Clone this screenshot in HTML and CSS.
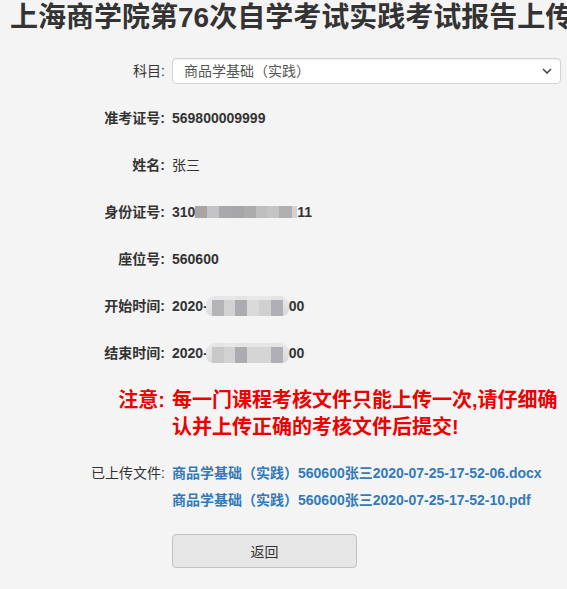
FILE: index.html
```html
<!DOCTYPE html>
<html lang="zh-CN">
<head>
<meta charset="utf-8">
<title>上海商学院第76次自学考试实践考试报告上传</title>
<link rel="stylesheet" href="styles.css">
</head>
<body>
<div class="page">
  <h2 class="title">上海商学院第76次自学考试实践考试报告上传</h2>
  <div class="form">
    <div class="row">
      <label class="lbl lbl-normal">科目:</label>
      <div class="val">
        <div class="select-wrap">
          <select class="select"><option>商品学基础（实践）</option></select>
          <svg class="chev" width="10" height="6" viewBox="0 0 10 6"><path d="M1 1l4 4 4-4" fill="none" stroke="#444" stroke-width="1.6"/></svg>
        </div>
      </div>
    </div>
    <div class="row">
      <label class="lbl">准考证号:</label>
      <div class="val"><span class="txt">569800009999</span></div>
    </div>
    <div class="row">
      <label class="lbl">姓名:</label>
      <div class="val"><span class="txt txt-normal">张三</span></div>
    </div>
    <div class="row">
      <label class="lbl">身份证号:</label>
      <div class="val">
        <span class="txt">310</span>
        <span class="mosaic mosaic-id">
          <i class="m w12 g1"></i><i class="m w12 g2"></i><i class="m w12 g3"></i><i class="m w13 g4"></i><i class="m w12 g5"></i><i class="m w11 g6"></i><i class="m w12 g7"></i><i class="m w13 g8"></i><i class="m w5 g9"></i>
        </span>
        <span class="txt">11</span>
      </div>
    </div>
    <div class="row">
      <label class="lbl">座位号:</label>
      <div class="val"><span class="txt">560600</span></div>
    </div>
    <div class="row">
      <label class="lbl">开始时间:</label>
      <div class="val">
        <span class="txt">2020-</span>
        <span class="mosaic mosaic-time">
          <i class="m w6 t1"></i><i class="m w12 t2"></i><i class="m w11 t3"></i><i class="m w12 t4"></i><i class="m w12 t5"></i><i class="m w12 t6"></i><i class="m w12 t7"></i><i class="m w6 t8"></i>
        </span>
        <span class="txt">00</span>
      </div>
    </div>
    <div class="row">
      <label class="lbl">结束时间:</label>
      <div class="val">
        <span class="txt">2020-</span>
        <span class="mosaic mosaic-time">
          <i class="m w6 t1"></i><i class="m w12 u2"></i><i class="m w11 t3"></i><i class="m w12 t4"></i><i class="m w12 u5"></i><i class="m w12 u6"></i><i class="m w12 t7"></i><i class="m w6 t8"></i>
        </span>
        <span class="txt">00</span>
      </div>
    </div>
    <div class="notice">
      <div class="notice-lbl">注意:</div>
      <div class="notice-txt">每一门课程考核文件只能上传一次,请仔细确认并上传正确的考核文件后提交!</div>
    </div>
    <div class="files">
      <div class="files-lbl">已上传文件:</div>
      <div class="files-list">
        <a class="file" href="#">商品学基础（实践）560600张三2020-07-25-17-52-06.docx</a>
        <a class="file" href="#">商品学基础（实践）560600张三2020-07-25-17-52-10.pdf</a>
      </div>
    </div>
    <div class="actions">
      <div></div>
      <div><button class="btn" type="button">返回</button></div>
    </div>
  </div>
</div>
</body>
</html>
```

FILE: styles.css
```css
html, body {
  margin: 0;
  padding: 0;
  background: #f4f4f4;
  overflow: hidden;
}
body {
  font-family: "Liberation Sans", "Noto Sans CJK SC", sans-serif;
  font-size: 14px;
  color: #333;
}
.page {
  width: 567px;
  overflow: hidden;
}
.title {
  margin: 0;
  padding-left: 10px;
  font-size: 28px;
  line-height: 36px;
  font-weight: bold;
  color: #333;
  white-space: nowrap;
}
.form {
  margin-top: 18px;
}
.row, .notice, .files, .actions {
  display: grid;
  grid-template-columns: 165px 390px;
  column-gap: 7px;
}
.row {
  min-height: 34px;
  align-items: center;
  margin-bottom: 13px;
}
.lbl {
  text-align: right;
  font-weight: bold;
  line-height: 20px;
}
.lbl-normal {
  font-weight: normal;
}
.val {
  display: flex;
  align-items: center;
  line-height: 20px;
}
.txt {
  font-weight: bold;
  white-space: pre;
}
.txt-normal {
  font-weight: normal;
}
.select-wrap {
  position: relative;
  width: 389px;
  height: 26px;
}
.select {
  appearance: none;
  -webkit-appearance: none;
  width: 100%;
  height: 26px;
  box-sizing: border-box;
  border: 1px solid #d2d2d2;
  border-radius: 4px;
  background: #fff;
  box-shadow: inset 0 1px 1px rgba(0,0,0,0.06);
  padding: 0 24px 0 11px;
  font-family: "Liberation Sans", "Noto Sans CJK SC", sans-serif;
  font-size: 14px;
  color: #555;
}
.chev {
  position: absolute;
  right: 9px;
  top: 10px;
  pointer-events: none;
}
.mosaic {
  display: inline-flex;
  overflow: hidden;
}
.mosaic-id {
  height: 12px;
}
.mosaic-time {
  height: 20px;
  margin-left: -2px;
  border-radius: 9px 9px 7px 7px;
}
.m {
  display: block;
  height: 100%;
}
.w5 { width: 5px; }
.w6 { width: 6px; }
.w11 { width: 11px; }
.w12 { width: 12px; }
.w13 { width: 13px; }
.g1 { background: #a9a5a4; }
.g2 { background: #c3c3c6; }
.g3 { background: #a9a9a9; }
.g4 { background: #a7a7a9; }
.g5 { background: #acacac; }
.g6 { background: #bfbebe; }
.g7 { background: #c4c4c6; }
.g8 { background: #b0b0b0; }
.g9 { background: #d2d2d2; }
.t1 { background: linear-gradient(#eaeaea, #dcdcdc); }
.t2 { background: linear-gradient(#e6e6e6 0 20%, #b3b3b8 20%); }
.t3 { background: linear-gradient(#e8e8e8 0 20%, #d2d2d2 20%); }
.t4 { background: linear-gradient(#e4e4e4 0 20%, #ababb0 20%); }
.t5 { background: linear-gradient(#e9e9e9 0 20%, #dadada 20%); }
.t6 { background: linear-gradient(#e8e8e8 0 20%, #d0d0d0 20%); }
.t7 { background: linear-gradient(#e4e4e4 0 20%, #afafb5 20%); }
.t8 { background: linear-gradient(#eaeaea, #d8d8d8); }
.u2 { background: linear-gradient(#e4e4e4 0 20%, #c8c8c8 20%); }
.u5 { background: linear-gradient(#e6e6e6 0 20%, #d5d5d5 20%); }
.u6 { background: linear-gradient(#e6e6e6 0 20%, #d5d5d5 20%); }
.notice {
  margin-top: 17px;
  color: #ee0000;
  font-size: 20px;
  font-weight: bold;
  line-height: 27px;
}
.notice-lbl {
  text-align: right;
}
.files {
  margin-top: 19px;
  line-height: 27px;
}
.files-lbl {
  text-align: right;
}
.files-list {
  display: flex;
  flex-direction: column;
}
.file {
  color: #337ab7;
  font-weight: bold;
  text-decoration: none;
  white-space: nowrap;
}
.actions {
  margin-top: 20px;
}
.btn {
  width: 185px;
  height: 34px;
  box-sizing: border-box;
  border: 1px solid #c2c2c2;
  border-radius: 4px;
  background: #e6e6e6;
  font-family: "Liberation Sans", "Noto Sans CJK SC", sans-serif;
  font-size: 14px;
  color: #333;
  padding: 0;
}
```
